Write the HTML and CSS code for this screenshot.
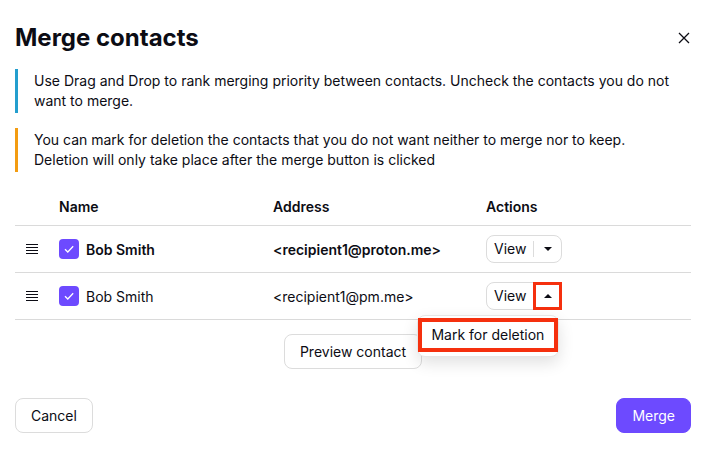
FILE: index.html
```html
<!DOCTYPE html>
<html lang="en">
<head>
    <meta charset="UTF-8">
    <meta name="viewport" content="width=device-width, initial-scale=1.0">
    <title>Merge contacts</title>
    <link rel="stylesheet" href="styles.css">
</head>
<body>
    <div class="modal">
        <div class="modal-header">
            <h1>Merge contacts</h1>
            <button class="close-btn" title="Close">
                <svg width="12" height="12" viewBox="0 0 12 12"><path d="M1 1 L11 11 M11 1 L1 11" stroke="#0c0c14" stroke-width="1.3" fill="none"/></svg>
            </button>
        </div>

        <div class="info info-blue">
            Use Drag and Drop to rank merging priority between contacts. Uncheck the contacts you do not want to merge.
        </div>
        <div class="info info-orange">
            You can mark for deletion the contacts that you do not want neither to merge nor to keep.<br>
            Deletion will only take place after the merge button is clicked
        </div>

        <div class="contacts">
            <div class="row head">
                <div></div>
                <div>Name</div>
                <div>Address</div>
                <div>Actions</div>
            </div>

            <div class="row">
                <div class="handle">
                    <svg width="12" height="10" viewBox="0 0 12 10"><path d="M0 0.5 H12 M0 3.5 H12 M0 6.5 H12 M0 9.5 H12" stroke="#0c0c14" stroke-width="1"/></svg>
                </div>
                <div class="name bold">
                    <span class="check">
                        <svg width="20" height="20" viewBox="0 0 20 20"><rect width="20" height="20" rx="4" fill="#6d4aff"/><path d="M6 10.2 L8.8 13 L14.2 7.3" stroke="#fff" stroke-width="1.3" fill="none"/></svg>
                    </span>
                    Bob Smith
                </div>
                <div class="bold">&lt;recipient1@proton.me&gt;</div>
                <div>
                    <div class="split-btn">
                        <span class="split-main">View</span>
                        <span class="split-caret"><span class="caret"></span></span>
                    </div>
                </div>
            </div>

            <div class="row">
                <div class="handle">
                    <svg width="12" height="10" viewBox="0 0 12 10"><path d="M0 0.5 H12 M0 3.5 H12 M0 6.5 H12 M0 9.5 H12" stroke="#0c0c14" stroke-width="1"/></svg>
                </div>
                <div class="name">
                    <span class="check">
                        <svg width="20" height="20" viewBox="0 0 20 20"><rect width="20" height="20" rx="4" fill="#6d4aff"/><path d="M6 10.2 L8.8 13 L14.2 7.3" stroke="#fff" stroke-width="1.3" fill="none"/></svg>
                    </span>
                    Bob Smith
                </div>
                <div>&lt;recipient1@pm.me&gt;</div>
                <div>
                    <div class="split-btn open">
                        <span class="split-main">View</span>
                        <span class="split-caret marked"><span class="caret up"></span></span>
                        <div class="dropdown">
                            <div class="dropdown-item marked">Mark for deletion</div>
                        </div>
                    </div>
                </div>
            </div>
        </div>

        <div class="preview">
            <button class="btn">Preview contact</button>
        </div>

        <div class="modal-footer">
            <button class="btn">Cancel</button>
            <button class="btn btn-primary">Merge</button>
        </div>
    </div>
</body>
</html>
```

FILE: styles.css
```css
body {
    margin: 0;
    padding: 0;
    background: #ffffff;
    font-family: Inter, "Noto Sans", Arial, sans-serif;
    font-size: 14px;
    color: #0c0c14;
}

.modal {
    padding: 25px 22px 20px 15px;
}

.modal-header {
    display: flex;
    justify-content: space-between;
    align-items: center;
    height: 26px;
}

h1 {
    margin: 0;
    font-size: 24px;
    line-height: 26px;
    font-weight: 700;
}

.close-btn {
    border: none;
    background: none;
    padding: 0;
    margin-right: 1px;
    width: 12px;
    height: 12px;
    display: flex;
}

.info {
    margin-top: 18px;
    padding: 2px 0 2px 16px;
    line-height: 20px;
    border-left: 3px solid #239ece;
}

.info-orange {
    margin-top: 15px;
    border-left-color: #f39c12;
}

.contacts {
    margin-top: 16px;
}

.row {
    display: grid;
    grid-template-columns: 44px 214px 213px 1fr;
    align-items: center;
    height: 46px;
    border-bottom: 1px solid #dadada;
}

.row.head {
    height: 37px;
    font-weight: 600;
}

.bold {
    font-weight: 600;
}

.handle {
    display: flex;
    padding-left: 11px;
}

.name {
    display: flex;
    align-items: center;
}

.check {
    display: flex;
    margin-right: 7px;
}

.split-btn {
    position: relative;
    display: inline-flex;
    align-items: center;
    height: 26px;
    border: 1px solid #dcdcdc;
    border-radius: 8px;
}

.split-main {
    padding: 0 7px 0 7px;
    border-right: 1px solid #dcdcdc;
    line-height: 16px;
}

.split-caret {
    display: flex;
    align-items: center;
    justify-content: center;
    width: 27px;
    height: 26px;
}

.caret {
    width: 0;
    height: 0;
    border-left: 4px solid transparent;
    border-right: 4px solid transparent;
    border-top: 4px solid #0c0c14;
}

.caret.up {
    border-top: none;
    border-bottom: 4px solid #0c0c14;
}

.open .split-main {
    border-right-color: transparent;
}

.split-caret.marked {
    outline: 3px solid #f5300e;
    outline-offset: -2px;
}

.dropdown {
    position: absolute;
    top: 32px;
    right: 2px;
    width: 140px;
    padding: 2px 0 4px 0;
    background: #ffffff;
    border: 1px solid #e6e6e6;
    border-radius: 8px;
    box-shadow: 0 6px 16px rgba(0, 0, 0, 0.12);
    z-index: 2;
}

.dropdown-item {
    height: 34px;
    line-height: 34px;
    padding-left: 13px;
    white-space: nowrap;
}

.dropdown-item.marked {
    outline: 4px solid #f5300e;
    outline-offset: -4px;
}

.preview {
    display: flex;
    justify-content: center;
    margin-top: 14px;
}

.btn {
    height: 35px;
    padding: 0 15px;
    font-family: inherit;
    font-size: 14px;
    color: #0c0c14;
    background: #ffffff;
    border: 1px solid #dcdcdc;
    border-radius: 8px;
}

.modal-footer {
    display: flex;
    justify-content: space-between;
    margin-top: 29px;
}

.btn-primary {
    background: #6d4aff;
    border-color: #6d4aff;
    color: #ffffff;
}
```
